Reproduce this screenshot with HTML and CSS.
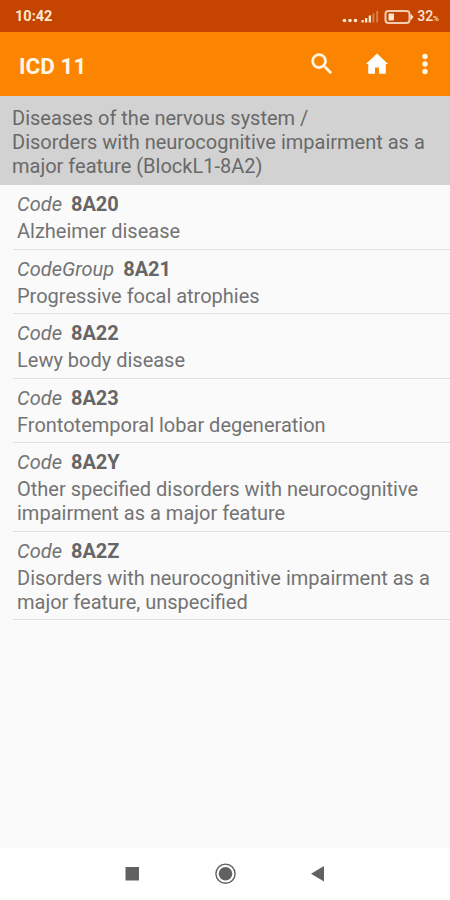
FILE: index.html
```html
<!DOCTYPE html>
<html lang="en">
<head>
    <meta charset="UTF-8">
    <meta name="viewport" content="width=device-width, initial-scale=1.0">
    <title>ICD 11</title>
    <link rel="stylesheet" href="styles.css">
</head>
<body>

<!-- Status bar -->
<div class="status-bar">
    <span class="time">10:42</span>
    <svg class="signal" width="38" height="16" viewBox="0 0 38 16">
        <circle cx="3.500" cy="11.500" r="1.800"/>
        <circle cx="9" cy="11.500" r="1.800"/>
        <circle cx="14.500" cy="11.500" r="1.800"/>
        <path d="M20.500 11h2.300v2.500h-2.300zM24 9h2.300v4.500h-2.300zM27.700 6.500h2.300v7h-2.300z"/>
        <path class="faint" d="M31.500 4.500h1.800v9h-1.800zM35.300 2h1.800v11.500h-1.800z"/>
    </svg>
    <svg class="battery" width="30" height="16" viewBox="0 0 30 16">
        <rect class="outline" x="1.500" y="2" width="24" height="12" rx="3"/>
        <rect x="4.500" y="4.500" width="5.500" height="7" rx="1"/>
        <path d="M26.500 4.500l3 3.500-3 3.500z"/>
    </svg>
    <span class="percent">32<small>%</small></span>
</div>

<!-- App bar -->
<header class="app-bar">
    <h1>ICD 11</h1>
    <svg class="search" width="28" height="28" viewBox="0 0 24 24">
        <path d="M15.500 14h-.79l-.28-.27A6.470 6.470 0 0 0 16 9.500 6.500 6.500 0 1 0 9.500 16c1.610 0 3.090-.59 4.230-1.570l.27.28v.79l5 4.990L20.490 19l-4.990-5zm-6 0C7.010 14 5 11.990 5 9.500S7.010 5 9.500 5 14 7.010 14 9.500 11.990 14 9.500 14z"/>
    </svg>
    <svg class="home" width="28" height="28" viewBox="0 0 24 24">
        <path d="M10.300 20.300v-5.300h3.400v5.300h5.800v-8.300H21.500L12 3 2.500 12h2v8.300z"/>
    </svg>
    <svg class="more" width="8" height="24" viewBox="0 0 8 24">
        <circle cx="4" cy="4.500" r="2.700"/>
        <circle cx="4" cy="12" r="2.700"/>
        <circle cx="4" cy="19.500" r="2.700"/>
    </svg>
</header>

<!-- Current position in the classification -->
<div class="path">
    Diseases of the nervous system /<br>
    Disorders with neurocognitive impairment as a major feature (BlockL1-8A2)
</div>

<!-- Codes -->
<ul class="list">
    <li>
        <div class="code"><i>Code</i><b>8A20</b></div>
        <div class="name">Alzheimer disease</div>
    </li>
    <li>
        <div class="code"><i>CodeGroup</i><b>8A21</b></div>
        <div class="name">Progressive focal atrophies</div>
    </li>
    <li>
        <div class="code"><i>Code</i><b>8A22</b></div>
        <div class="name">Lewy body disease</div>
    </li>
    <li>
        <div class="code"><i>Code</i><b>8A23</b></div>
        <div class="name">Frontotemporal lobar degeneration</div>
    </li>
    <li>
        <div class="code"><i>Code</i><b>8A2Y</b></div>
        <div class="name">Other specified disorders with neurocognitive impairment as a major feature</div>
    </li>
    <li>
        <div class="code"><i>Code</i><b>8A2Z</b></div>
        <div class="name">Disorders with neurocognitive impairment as a major feature, unspecified</div>
    </li>
</ul>

<!-- System navigation -->
<nav class="nav-bar">
    <svg width="24" height="24" viewBox="0 0 24 24"><path d="M5.500 5h13.500v13.500h-13.500z"/></svg>
    <svg width="24" height="24" viewBox="0 0 24 24">
        <circle class="ring" cx="12.500" cy="11.700" r="9.600"/>
        <circle cx="12.500" cy="11.700" r="6.800"/>
    </svg>
    <svg width="24" height="24" viewBox="0 0 24 24"><path d="M18 4v15.500L5 11.700z"/></svg>
</nav>

</body>
</html>
```
FILE: styles.css
```css
* {
    box-sizing: border-box;
}

body {
    margin: 0;
    height: 100vh;
    display: flex;
    flex-direction: column;
    font-family: Roboto, sans-serif;
    font-size: 20px;
    line-height: 24px;
    color: #737373;
    background-color: #fafafa;
    overflow: hidden;
}

.status-bar {
    height: 32px;
    flex-shrink: 0;
    display: flex;
    align-items: center;
    padding: 1px 11px 0 15px;
    background-color: #c44400;
    color: #ffe6cf;
    fill: #ffe6cf;
    font-size: 14px;
    font-weight: 500;
}

.time {
    margin-right: auto;
    font-size: 14.5px;
    font-weight: 700;
}

.signal .faint {
    opacity: 0.4;
}

.battery {
    margin: 0 3px 0 5px;
}

.battery .outline {
    fill: none;
    stroke: #f5cdb0;
    stroke-width: 2;
}

.percent {
    padding-top: 2px;
}

.percent small {
    font-size: 8px;
}

.app-bar {
    height: 64px;
    flex-shrink: 0;
    display: flex;
    align-items: center;
    padding: 0 21px 0 19px;
    background-color: #fb8500;
    color: #fff6e6;
    fill: #fff6e6;
}

.app-bar h1 {
    margin: 4px auto 0 0;
    font-size: 22.5px;
    font-weight: 700;
}

.search {
    stroke: #fff6e6;
    stroke-width: 0.4;
}

.home {
    margin: 0 30px 0 27px;
    fill: #fff;
}

.path {
    flex-shrink: 0;
    height: 89px;
    padding: 10px 12px 0;
    background-color: #d2d2d2;
    color: #696969;
}

.list {
    flex: 1;
    margin: 0;
    padding: 0 0 0 13px;
    list-style: none;
}

.list li {
    padding: 7px 12px 5.5px 4px;
    border-bottom: 1px solid #e0e0e0;
}

.code {
    margin-bottom: 3px;
}

.code b {
    margin-left: 9px;
    color: #666;
}

.nav-bar {
    height: 52px;
    flex-shrink: 0;
    display: flex;
    justify-content: center;
    gap: 69px;
    padding-top: 14px;
    background-color: #fff;
    fill: #616161;
}

.nav-bar .ring {
    fill: none;
    stroke: #616161;
    stroke-width: 1.4;
}
```
